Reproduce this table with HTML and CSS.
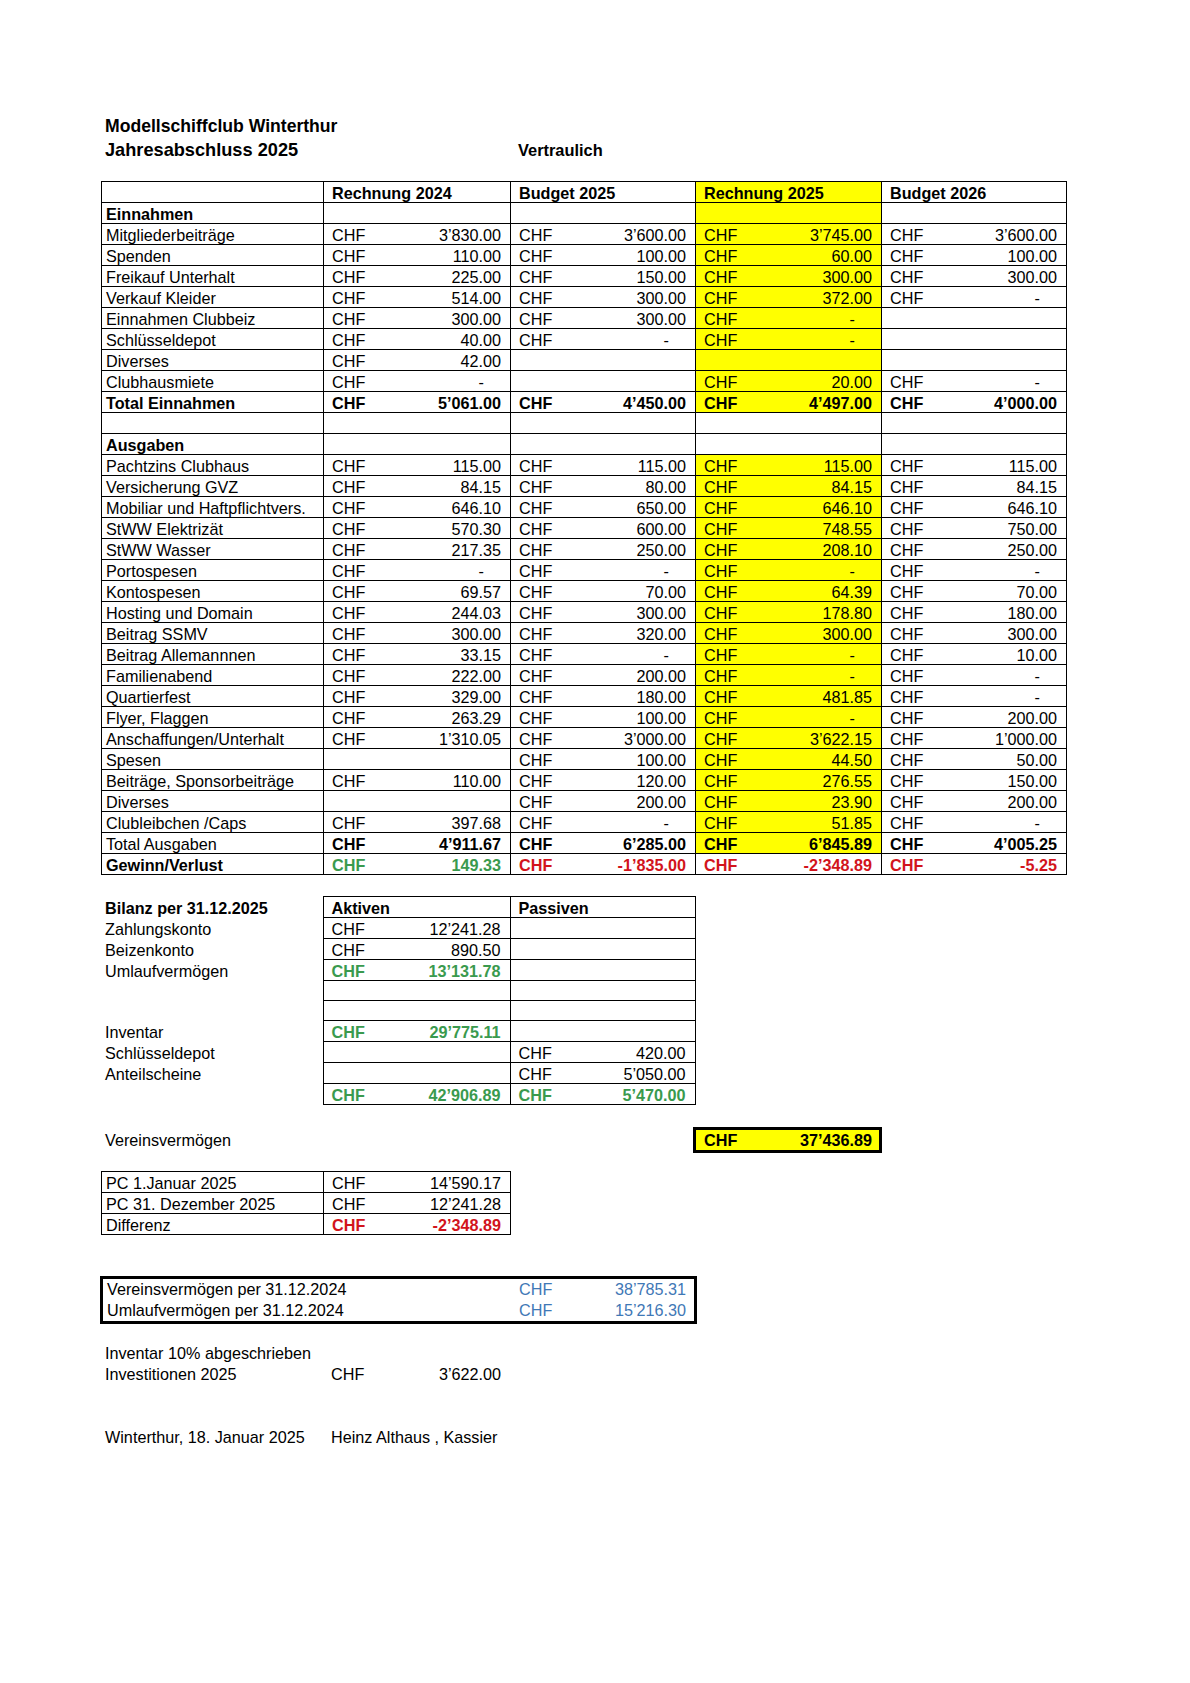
FILE: index.html
```html
<!DOCTYPE html>
<html lang="de">
<head>
<meta charset="utf-8">
<title>Jahresabschluss 2025</title>
<link rel="stylesheet" href="styles.css">
</head>
<body>
<div class="page">
  <div class="title">Modellschiffclub Winterthur</div>
  <div class="title-row"><span class="title sub">Jahresabschluss 2025</span><span class="conf">Vertraulich</span></div>

  <table class="sheet main">
    <colgroup><col class="w-l"><col class="w-c"><col class="w-a1"><col class="w-c"><col class="w-a2"><col class="w-c"><col class="w-a3"><col class="w-c"><col class="w-a4"></colgroup>
    <tr class="bold"><td class="l">&nbsp;</td><td class="c hd" colspan="2">Rechnung 2024</td><td class="c hd" colspan="2">Budget 2025</td><td class="c hd y" colspan="2">Rechnung 2025</td><td class="c hd" colspan="2">Budget 2026</td></tr>
    <tr><td class="l bold">Einnahmen</td><td class="c"></td><td class="a"></td><td class="c"></td><td class="a"></td><td class="c y"></td><td class="a y"></td><td class="c"></td><td class="a"></td></tr>
    <tr><td class="l">Mitgliederbeiträge</td><td class="c">CHF</td><td class="a">3’830.00</td><td class="c">CHF</td><td class="a">3’600.00</td><td class="c y">CHF</td><td class="a y">3’745.00</td><td class="c">CHF</td><td class="a">3’600.00</td></tr>
    <tr><td class="l">Spenden</td><td class="c">CHF</td><td class="a">110.00</td><td class="c">CHF</td><td class="a">100.00</td><td class="c y">CHF</td><td class="a y">60.00</td><td class="c">CHF</td><td class="a">100.00</td></tr>
    <tr><td class="l">Freikauf Unterhalt</td><td class="c">CHF</td><td class="a">225.00</td><td class="c">CHF</td><td class="a">150.00</td><td class="c y">CHF</td><td class="a y">300.00</td><td class="c">CHF</td><td class="a">300.00</td></tr>
    <tr><td class="l">Verkauf Kleider</td><td class="c">CHF</td><td class="a">514.00</td><td class="c">CHF</td><td class="a">300.00</td><td class="c y">CHF</td><td class="a y">372.00</td><td class="c">CHF</td><td class="a z">-</td></tr>
    <tr><td class="l">Einnahmen Clubbeiz</td><td class="c">CHF</td><td class="a">300.00</td><td class="c">CHF</td><td class="a">300.00</td><td class="c y">CHF</td><td class="a z y">-</td><td class="c"></td><td class="a"></td></tr>
    <tr><td class="l">Schlüsseldepot</td><td class="c">CHF</td><td class="a">40.00</td><td class="c">CHF</td><td class="a z">-</td><td class="c y">CHF</td><td class="a z y">-</td><td class="c"></td><td class="a"></td></tr>
    <tr><td class="l">Diverses</td><td class="c">CHF</td><td class="a">42.00</td><td class="c"></td><td class="a"></td><td class="c y"></td><td class="a y"></td><td class="c"></td><td class="a"></td></tr>
    <tr><td class="l">Clubhausmiete</td><td class="c">CHF</td><td class="a z">-</td><td class="c"></td><td class="a"></td><td class="c y">CHF</td><td class="a y">20.00</td><td class="c">CHF</td><td class="a z">-</td></tr>
    <tr class="bold"><td class="l">Total Einnahmen</td><td class="c">CHF</td><td class="a">5’061.00</td><td class="c">CHF</td><td class="a">4’450.00</td><td class="c y">CHF</td><td class="a y">4’497.00</td><td class="c">CHF</td><td class="a">4’000.00</td></tr>
    <tr><td class="l">&nbsp;</td><td class="c"></td><td class="a"></td><td class="c"></td><td class="a"></td><td class="c"></td><td class="a"></td><td class="c"></td><td class="a"></td></tr>
    <tr><td class="l bold">Ausgaben</td><td class="c"></td><td class="a"></td><td class="c"></td><td class="a"></td><td class="c"></td><td class="a"></td><td class="c"></td><td class="a"></td></tr>
    <tr><td class="l">Pachtzins Clubhaus</td><td class="c">CHF</td><td class="a">115.00</td><td class="c">CHF</td><td class="a">115.00</td><td class="c y">CHF</td><td class="a y">115.00</td><td class="c">CHF</td><td class="a">115.00</td></tr>
    <tr><td class="l">Versicherung GVZ</td><td class="c">CHF</td><td class="a">84.15</td><td class="c">CHF</td><td class="a">80.00</td><td class="c y">CHF</td><td class="a y">84.15</td><td class="c">CHF</td><td class="a">84.15</td></tr>
    <tr><td class="l">Mobiliar und Haftpflichtvers.</td><td class="c">CHF</td><td class="a">646.10</td><td class="c">CHF</td><td class="a">650.00</td><td class="c y">CHF</td><td class="a y">646.10</td><td class="c">CHF</td><td class="a">646.10</td></tr>
    <tr><td class="l">StWW Elektrizät</td><td class="c">CHF</td><td class="a">570.30</td><td class="c">CHF</td><td class="a">600.00</td><td class="c y">CHF</td><td class="a y">748.55</td><td class="c">CHF</td><td class="a">750.00</td></tr>
    <tr><td class="l">StWW Wasser</td><td class="c">CHF</td><td class="a">217.35</td><td class="c">CHF</td><td class="a">250.00</td><td class="c y">CHF</td><td class="a y">208.10</td><td class="c">CHF</td><td class="a">250.00</td></tr>
    <tr><td class="l">Portospesen</td><td class="c">CHF</td><td class="a z">-</td><td class="c">CHF</td><td class="a z">-</td><td class="c y">CHF</td><td class="a z y">-</td><td class="c">CHF</td><td class="a z">-</td></tr>
    <tr><td class="l">Kontospesen</td><td class="c">CHF</td><td class="a">69.57</td><td class="c">CHF</td><td class="a">70.00</td><td class="c y">CHF</td><td class="a y">64.39</td><td class="c">CHF</td><td class="a">70.00</td></tr>
    <tr><td class="l">Hosting und Domain</td><td class="c">CHF</td><td class="a">244.03</td><td class="c">CHF</td><td class="a">300.00</td><td class="c y">CHF</td><td class="a y">178.80</td><td class="c">CHF</td><td class="a">180.00</td></tr>
    <tr><td class="l">Beitrag SSMV</td><td class="c">CHF</td><td class="a">300.00</td><td class="c">CHF</td><td class="a">320.00</td><td class="c y">CHF</td><td class="a y">300.00</td><td class="c">CHF</td><td class="a">300.00</td></tr>
    <tr><td class="l">Beitrag Allemannnen</td><td class="c">CHF</td><td class="a">33.15</td><td class="c">CHF</td><td class="a z">-</td><td class="c y">CHF</td><td class="a z y">-</td><td class="c">CHF</td><td class="a">10.00</td></tr>
    <tr><td class="l">Familienabend</td><td class="c">CHF</td><td class="a">222.00</td><td class="c">CHF</td><td class="a">200.00</td><td class="c y">CHF</td><td class="a z y">-</td><td class="c">CHF</td><td class="a z">-</td></tr>
    <tr><td class="l">Quartierfest</td><td class="c">CHF</td><td class="a">329.00</td><td class="c">CHF</td><td class="a">180.00</td><td class="c y">CHF</td><td class="a y">481.85</td><td class="c">CHF</td><td class="a z">-</td></tr>
    <tr><td class="l">Flyer, Flaggen</td><td class="c">CHF</td><td class="a">263.29</td><td class="c">CHF</td><td class="a">100.00</td><td class="c y">CHF</td><td class="a z y">-</td><td class="c">CHF</td><td class="a">200.00</td></tr>
    <tr><td class="l">Anschaffungen/Unterhalt</td><td class="c">CHF</td><td class="a">1’310.05</td><td class="c">CHF</td><td class="a">3’000.00</td><td class="c y">CHF</td><td class="a y">3’622.15</td><td class="c">CHF</td><td class="a">1’000.00</td></tr>
    <tr><td class="l">Spesen</td><td class="c"></td><td class="a"></td><td class="c">CHF</td><td class="a">100.00</td><td class="c y">CHF</td><td class="a y">44.50</td><td class="c">CHF</td><td class="a">50.00</td></tr>
    <tr><td class="l">Beiträge, Sponsorbeiträge</td><td class="c">CHF</td><td class="a">110.00</td><td class="c">CHF</td><td class="a">120.00</td><td class="c y">CHF</td><td class="a y">276.55</td><td class="c">CHF</td><td class="a">150.00</td></tr>
    <tr><td class="l">Diverses</td><td class="c"></td><td class="a"></td><td class="c">CHF</td><td class="a">200.00</td><td class="c y">CHF</td><td class="a y">23.90</td><td class="c">CHF</td><td class="a">200.00</td></tr>
    <tr><td class="l">Clubleibchen /Caps</td><td class="c">CHF</td><td class="a">397.68</td><td class="c">CHF</td><td class="a z">-</td><td class="c y">CHF</td><td class="a y">51.85</td><td class="c">CHF</td><td class="a z">-</td></tr>
    <tr><td class="l">Total Ausgaben</td><td class="c bold">CHF</td><td class="a bold">4’911.67</td><td class="c bold">CHF</td><td class="a bold">6’285.00</td><td class="c y bold">CHF</td><td class="a y bold">6’845.89</td><td class="c bold">CHF</td><td class="a bold">4’005.25</td></tr>
    <tr class="bold"><td class="l">Gewinn/Verlust</td><td class="c green">CHF</td><td class="a green">149.33</td><td class="c red">CHF</td><td class="a red">-1’835.00</td><td class="c red">CHF</td><td class="a red">-2’348.89</td><td class="c red">CHF</td><td class="a red">-5.25</td></tr>
  </table>

  <table class="sheet bilanz">
    <colgroup><col class="w-l"><col class="w-c"><col class="w-a1"><col class="w-c"><col class="w-a2"></colgroup>
    <tr><td class="n bold">Bilanz per 31.12.2025</td><td class="c hd first bold" colspan="2">Aktiven</td><td class="c hd bold" colspan="2">Passiven</td></tr>
    <tr><td class="n">Zahlungskonto</td><td class="c first">CHF</td><td class="a">12’241.28</td><td class="c"></td><td class="a"></td></tr>
    <tr><td class="n">Beizenkonto</td><td class="c first">CHF</td><td class="a">890.50</td><td class="c"></td><td class="a"></td></tr>
    <tr><td class="n">Umlaufvermögen</td><td class="c first green bold">CHF</td><td class="a green bold">13’131.78</td><td class="c"></td><td class="a"></td></tr>
    <tr><td class="n">&nbsp;</td><td class="c first"></td><td class="a"></td><td class="c"></td><td class="a"></td></tr>
    <tr><td class="n">&nbsp;</td><td class="c first"></td><td class="a"></td><td class="c"></td><td class="a"></td></tr>
    <tr><td class="n">Inventar</td><td class="c first green bold">CHF</td><td class="a green bold">29’775.11</td><td class="c"></td><td class="a"></td></tr>
    <tr><td class="n">Schlüsseldepot</td><td class="c first"></td><td class="a"></td><td class="c">CHF</td><td class="a">420.00</td></tr>
    <tr><td class="n">Anteilscheine</td><td class="c first"></td><td class="a"></td><td class="c">CHF</td><td class="a">5’050.00</td></tr>
    <tr><td class="n">&nbsp;</td><td class="c first green bold">CHF</td><td class="a green bold">42’906.89</td><td class="c green bold">CHF</td><td class="a green bold">5’470.00</td></tr>
  </table>

  <div class="vv-row">
    <span class="vv-label">Vereinsvermögen</span>
    <div class="vv-box"><span>CHF</span><span>37’436.89</span></div>
  </div>

  <table class="sheet pc">
    <colgroup><col class="w-l"><col class="w-c"><col class="w-a1"></colgroup>
    <tr><td class="l">PC 1.Januar 2025</td><td class="c">CHF</td><td class="a">14’590.17</td></tr>
    <tr><td class="l">PC 31. Dezember 2025</td><td class="c">CHF</td><td class="a">12’241.28</td></tr>
    <tr><td class="l">Differenz</td><td class="c red bold">CHF</td><td class="a red bold">-2’348.89</td></tr>
  </table>

  <div class="prev-box">
    <div class="prev-row"><span class="pl">Vereinsvermögen per 31.12.2024</span><span class="pc-chf">CHF</span><span class="pa">38’785.31</span></div>
    <div class="prev-row"><span class="pl">Umlaufvermögen per 31.12.2024</span><span class="pc-chf">CHF</span><span class="pa">15’216.30</span></div>
  </div>

  <div class="notes">
    <div class="line"><span class="ll">Inventar 10% abgeschrieben</span></div>
    <div class="line"><span class="ll">Investitionen 2025</span><span class="lc">CHF</span><span class="la">3’622.00</span></div>
  </div>

  <div class="sign line"><span class="ll">Winterthur, 18. Januar 2025</span><span class="ls">Heinz Althaus , Kassier</span></div>
</div>
</body>
</html>
```

FILE: styles.css
```css
body {
  margin: 0;
  background: #fff;
  color: #000;
  font-family: "Liberation Sans", Arial, sans-serif;
  font-size: 16.2px;
}

.page {
  padding: 115px 0 60px 101px;
}

.title {
  font-weight: bold;
  font-size: 17.6px;
  line-height: 23.6px;
  padding-left: 4px;
}

.title-row {
  display: flex;
  align-items: baseline;
}

.title-row .sub {
  width: 413px;
  font-size: 18.2px;
}

.conf {
  font-weight: bold;
  font-size: 16.4px;
}

/* spreadsheet tables */
.sheet {
  border-collapse: collapse;
  table-layout: fixed;
}

.sheet td {
  padding: 3px 0 0;
  line-height: 17px;
  border-top: 1px solid #000;
  border-bottom: 1px solid #000;
  white-space: nowrap;
  overflow: hidden;
}

.w-l { width: 222px; }
.w-c { width: 60px; }
.w-a1 { width: 127px; }
.w-a2 { width: 125px; }
.w-a3 { width: 126px; }
.w-a4 { width: 125px; }

.main { margin-top: 19px; }

.sheet .l {
  padding-left: 4px;
  border-left: 1px solid #000;
  border-right: 1px solid #000;
}

.sheet .c {
  padding-left: 8px;
  text-align: left;
}

.sheet .hd {
  border-right: 1px solid #000;
}

.sheet .a {
  padding-right: 9px;
  text-align: right;
  border-right: 1px solid #000;
}

.sheet .a.z {
  padding-right: 26px;
}

.y { background: #ffff00; }
.bold { font-weight: bold; }
.green { color: #3a9a4e; }
.red { color: #d2141c; }

/* Bilanz */
.bilanz { margin-top: 21px; }

.sheet .n {
  padding-left: 4px;
  border-top: none;
  border-bottom: none;
}

.sheet .first {
  border-left: 1px solid #000;
}

/* Vereinsvermögen */
.vv-row {
  display: flex;
  align-items: center;
  margin-top: 22px;
  height: 26px;
}

.vv-label {
  width: 592px;
  padding-left: 4px;
  box-sizing: border-box;
}

.vv-box {
  box-sizing: border-box;
  width: 189px;
  height: 26px;
  border: 3px solid #000;
  background: #ffff00;
  font-weight: bold;
  display: flex;
  justify-content: space-between;
  align-items: center;
  padding: 1px 7px 0 8px;
}

/* PC table */
.pc { margin-top: 18px; }

/* previous year box */
.prev-box {
  margin-top: 41px;
  margin-left: -1px;
  width: 597px;
  box-sizing: border-box;
  border: 3px solid #000;
}

.prev-row {
  display: grid;
  grid-template-columns: 408px 60px 1fr;
  line-height: 21px;
  height: 21px;
}

.pl { padding-left: 4px; }
.pc-chf { padding-left: 8px; color: #3f78b6; }
.pa { text-align: right; padding-right: 8px; color: #3f78b6; }

/* notes */
.notes { margin-top: 19px; }

.line {
  display: grid;
  grid-template-columns: 222px 60px 127px;
  line-height: 21px;
  height: 21px;
}

.ll { padding-left: 4px; white-space: nowrap; }
.lc { padding-left: 8px; }
.la { text-align: right; padding-right: 9px; }

.sign {
  margin-top: 42px;
}

.ls {
  padding-left: 8px;
  white-space: nowrap;
  grid-column: 2 / span 2;
}
```
